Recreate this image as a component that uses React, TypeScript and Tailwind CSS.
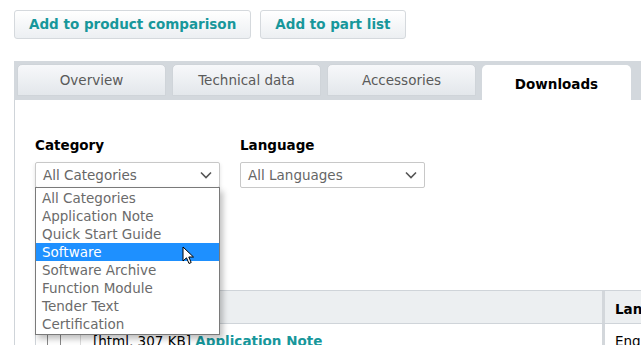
import React from 'react';

const OPTIONS = [
    'All Categories',
    'Application Note',
    'Quick Start Guide',
    'Software',
    'Software Archive',
    'Function Module',
    'Tender Text',
    'Certification',
];
const TABS = ['Overview', 'Technical data', 'Accessories'];

const Chevron: React.FC = () => (
    <svg width="12" height="8" viewBox="0 0 12 8" className="shrink-0">
        <path d="M1 1.5 L6 6.5 L11 1.5" fill="none" stroke="#555" strokeWidth="1.6" />
    </svg>
);

const Cursor: React.FC = () => (
    <svg width="13" height="20" viewBox="0 0 13 20">
        <path
            d="M1 1 L1 15 L4.5 11.8 L7 17.5 L9.2 16.5 L6.8 11 L11.5 11 Z"
            fill="#fff"
            stroke="#000"
            strokeWidth="1"
            strokeLinejoin="round"
        />
    </svg>
);

export default function App() {
    return (
        <div
            className="w-[641px] h-[345px] overflow-hidden bg-white relative text-[#333]"
            style={{ fontFamily: '"DejaVu Sans", Verdana, sans-serif' }}
        >
            {/* Action buttons */}
            <div className="flex gap-[9px] pl-[14px] pt-[10px]">
                <button className="h-[29px] px-[14px] rounded-[3px] border border-[#d5d9dd] bg-gradient-to-b from-white to-[#eceff2] text-[#17979b] font-bold text-[13.5px]">
                    Add to product comparison
                </button>
                <button className="h-[29px] px-[14px] rounded-[3px] border border-[#d5d9dd] bg-gradient-to-b from-white to-[#eceff2] text-[#17979b] font-bold text-[13.5px]">
                    Add to part list
                </button>
            </div>

            {/* Tabs */}
            <div className="ml-[14px] mt-[22px] bg-[#d3d8dd] h-[39px] flex items-end gap-[6px] pl-[3px]">
                {TABS.map((t) => (
                    <div
                        key={t}
                        className="w-[149px] h-[32px] mb-[4px] rounded-t-[5px] border border-[#cfd4d9] bg-gradient-to-b from-[#f7f8fa] to-[#e3e7eb] flex items-center justify-center text-[13.5px] text-[#5a5a5a]"
                    >
                        {t}
                    </div>
                ))}
                <div className="w-[149px] h-[35px] rounded-t-[5px] bg-white flex items-start pt-[9px] justify-center text-[13.5px] font-bold text-black">
                    Downloads
                </div>
            </div>

            {/* Panel */}
            <div className="ml-[14px] border-l border-[#cfd4d9] h-[260px] pl-[20px] pt-[35px]">
                <div className="flex gap-[20px]">
                    <div className="w-[185px]">
                        <div className="font-bold text-[13.5px] text-black h-[20px]">Category</div>
                        <div className="mt-[7px] h-[26px] border border-[#c8c8c8] rounded-[2px] flex items-center justify-between px-[7px] shadow-[0_2px_4px_rgba(0,0,0,0.12)]">
                            <span className="text-[13.5px] text-[#666]">All Categories</span>
                            <Chevron />
                        </div>
                    </div>
                    <div className="w-[185px]">
                        <div className="font-bold text-[13.5px] text-black h-[20px]">Language</div>
                        <div className="mt-[7px] h-[26px] border border-[#c8c8c8] rounded-[2px] flex items-center justify-between px-[7px]">
                            <span className="text-[13.5px] text-[#666]">All Languages</span>
                            <Chevron />
                        </div>
                    </div>
                </div>

                {/* Table */}
                <div className="mt-[102px] mr-[-20px] border-t border-[#cfd4d9] overflow-hidden">
                    <div className="h-[33px] bg-[#eceff1] flex border-b border-[#cfd4d9] border-l">
                        <div className="w-[569px] shrink-0 border-r-[3px] border-[#d3d7db]" />
                        <div className="pl-[10px] pt-[8px] font-bold text-[13.5px] text-black whitespace-nowrap">Language</div>
                    </div>
                    <div className="flex h-[30px] border-l border-[#cfd4d9]">
                        <div className="w-[45px] shrink-0 pl-[11px] pt-[9px] border-r border-[#dcdcdc]">
                            <div className="w-[14px] h-[14px] border border-[#888] rounded-[2px]" />
                        </div>
                        <div className="w-[524px] shrink-0 pl-[12px] pt-[7px] text-[13.5px] text-black border-r-[3px] border-[#d3d7db] whitespace-nowrap">
                            [html, 307 KB] <span className="font-bold text-[#17979b]">Application Note</span>
                        </div>
                        <div className="pl-[10px] pt-[7px] text-[13.5px] text-black whitespace-nowrap">English</div>
                    </div>
                </div>
            </div>

            {/* Open dropdown list */}
            <div className="absolute left-[35px] top-[187px] w-[185px] border border-[#7a7a7a] bg-white shadow-[3px_4px_6px_rgba(0,0,0,0.25)] py-[1px]">
                {OPTIONS.map((o) => (
                    <div
                        key={o}
                        className={`h-[18px] leading-[18px] px-[6px] text-[13.5px] ${
                            o === 'Software' ? 'bg-[#1e90ff] text-white' : 'text-[#6b6b6b]'
                        }`}
                    >
                        {o}
                    </div>
                ))}
            </div>

            <div className="absolute left-[182px] top-[246px]">
                <Cursor />
            </div>
        </div>
    );
}
